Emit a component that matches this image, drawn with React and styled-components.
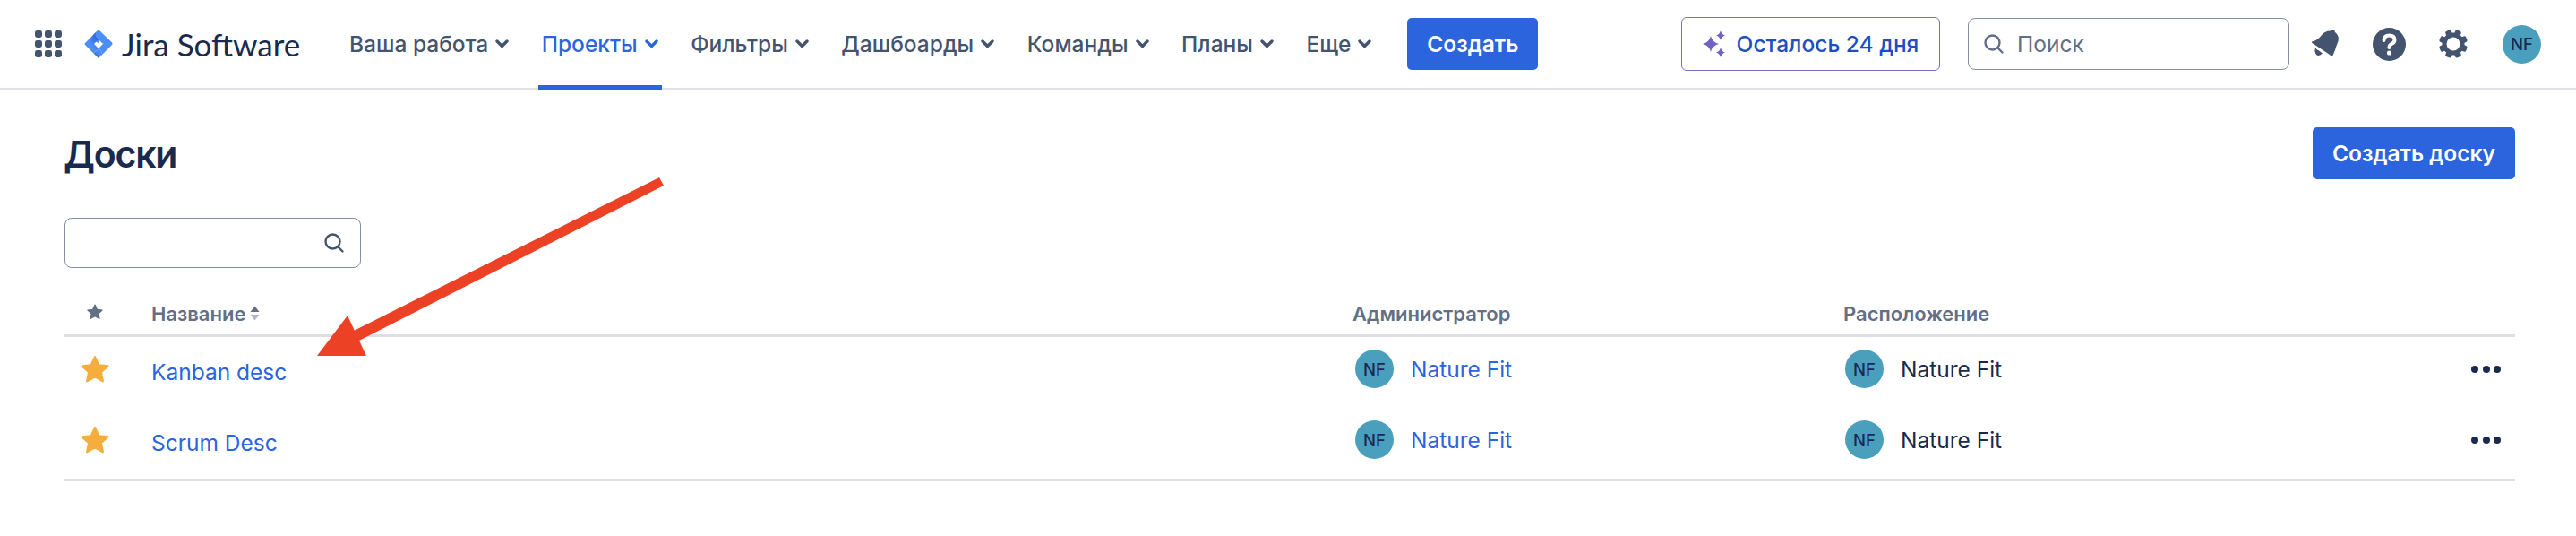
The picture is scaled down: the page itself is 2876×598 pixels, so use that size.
import React from 'react';
import styled, { createGlobalStyle } from 'styled-components';

const GlobalStyle = createGlobalStyle`
  html, body { margin: 0; padding: 0; background: #fff; }
  body { font-family: Inter, "Liberation Sans", sans-serif; color: #1a2a4f; }
`;

const BLUE = '#2c64dd';
const NAV_ITEMS = ['Ваша работа', 'Проекты', 'Фильтры', 'Дашбоарды', 'Команды', 'Планы', 'Еще'];
const BOARDS = [
  { name: 'Kanban desc' },
  { name: 'Scrum Desc' },
];

const Page = styled.div`
  width: 2876px;
  height: 598px;
  position: relative;
  overflow: hidden;
`;

const TopBar = styled.header`
  height: 100px;
  box-sizing: border-box;
  padding: 0 39px;
  display: flex;
  align-items: center;
  border-bottom: 2px solid #e0e1e8;
`;

const Brand = styled.div`
  display: flex;
  align-items: center;
  width: 347px;
  flex: none;
`;

const BrandName = styled.span`
  font-family: Lato, sans-serif;
  font-size: 35px;
  color: #1a2a4f;
  margin-left: 10px;
  white-space: nowrap;
`;

const Nav = styled.nav`
  display: flex;
  align-self: stretch;
  gap: 28.5px;
`;

const NavItem = styled.div`
  display: flex;
  align-items: center;
  gap: 8px;
  padding: 2px 4px 0;
  margin-bottom: -2px;
  font-size: 24.5px;
  font-weight: 500;
  white-space: nowrap;
  color: ${p => (p.$active ? BLUE : '#44546f')};
  border-bottom: 5px solid ${p => (p.$active ? BLUE : 'transparent')};
`;

const PrimaryButton = styled.button`
  height: 58px;
  border: 0;
  border-radius: 5px;
  background: ${BLUE};
  color: #fff;
  font: 600 24.5px Inter, sans-serif;
  padding: 0 22px;
  white-space: nowrap;
`;

const CreateButton = styled(PrimaryButton)`
  margin-left: 36px;
`;

const RightGroup = styled.div`
  margin-left: auto;
  display: flex;
  align-items: center;
`;

const TrialButton = styled.div`
  width: 289px;
  height: 60px;
  box-sizing: border-box;
  border: 1.5px solid #7e6cc9;
  border-radius: 6px;
  display: flex;
  align-items: center;
  justify-content: center;
  gap: 12px;
  color: #1d4fc2;
  font-size: 24.5px;
  font-weight: 500;
  white-space: nowrap;
`;

const SearchField = styled.div`
  width: ${p => p.$width}px;
  height: ${p => p.$height}px;
  box-sizing: border-box;
  border: 1.5px solid #8590a2;
  border-radius: 8px;
  display: flex;
  align-items: center;
  justify-content: ${p => (p.$iconRight ? 'flex-end' : 'flex-start')};
  padding: ${p => (p.$iconRight ? '0 18px 0 0' : '0 0 0 17px')};
  gap: 15px;
  color: #626f86;
  font-size: 24.5px;
`;

const TopSearch = styled(SearchField)`
  margin-left: 31px;
`;

const IconSlot = styled.div`
  margin-left: ${p => p.$gap}px;
  display: flex;
`;

const Avatar = styled.div`
  width: 43px;
  height: 43px;
  flex: none;
  border-radius: 50%;
  background: #4a9fbd;
  color: #1a2a4f;
  font-size: 18.5px;
  font-weight: 500;
  display: flex;
  align-items: center;
  justify-content: center;
`;

const Main = styled.main`
  padding: 42px 68px 0 72px;
`;

const TitleRow = styled.div`
  display: flex;
  align-items: flex-start;
  justify-content: space-between;
`;

const Title = styled.h1`
  margin: 5px 0 0 -1px;
  font-size: 41px;
  line-height: 50px;
  font-weight: 600;
  letter-spacing: -1.2px;
  color: #1a2a4f;
`;

const FilterRow = styled.div`
  margin-top: 43px;
`;

const Row = styled.div`
  display: grid;
  grid-template-columns: 97px 1341px 548px 1fr 49px;
  align-items: center;
`;

const HeaderRow = styled(Row)`
  margin-top: 24px;
  height: 50px;
  border-bottom: 3px solid #dedfe6;
  color: #626f86;
  font-size: 22px;
  font-weight: 600;
`;

const HeadText = styled.div`
  padding-top: 3px;
`;

const BodyRow = styled(Row)`
  height: 79px;
  box-sizing: border-box;
  font-size: 24.5px;
  padding-bottom: 8px;
  & + & {
    height: 82px;
    padding: 0 0 8px;
    border-bottom: 3px solid #dedfe6;
  }
`;

const HeadLabel = styled(HeadText)`
  display: flex;
  align-items: center;
  gap: 5px;
`;

const StarCell = styled.div`
  display: flex;
  padding-left: ${p => p.$pad}px;
`;

const BoardLink = styled.a`
  color: ${BLUE};
  position: relative;
  top: 3px;
`;

const Person = styled.div`
  display: flex;
  align-items: center;
  gap: 19px;
  padding-left: ${p => p.$pad}px;
  color: ${p => (p.$link ? BLUE : '#1a2a4f')};
`;

const Dots = styled.div`
  display: flex;
  gap: 4.5px;
  justify-self: start;
`;

const Dot = styled.span`
  width: 8px;
  height: 8px;
  border-radius: 50%;
  background: #1a2a4f;
`;

const ArrowOverlay = styled.svg`
  position: absolute;
  left: 0;
  top: 0;
  pointer-events: none;
`;

const GridIcon = () => (
  <svg width="30" height="30" viewBox="0 0 30 30" fill="#44546f">
    {[0, 11, 22].map(y => [0, 11, 22].map(x => (
      <rect key={`${x}-${y}`} x={x} y={y} width="8" height="8" rx="2.4" />
    )))}
  </svg>
);

const JiraLogo = () => (
  <svg width="32" height="32" viewBox="0 0 32 32" style={{ marginLeft: 25 }}>
    <defs>
      <linearGradient id="jiraA" x1="0.7" y1="0.1" x2="0.35" y2="0.5">
        <stop offset="0" stopColor="#2a62d8" />
        <stop offset="1" stopColor="#4c8df6" />
      </linearGradient>
      <linearGradient id="jiraB" x1="0.35" y1="0.95" x2="0.65" y2="0.5">
        <stop offset="0" stopColor="#2a62d8" />
        <stop offset="1" stopColor="#4c8df6" />
      </linearGradient>
    </defs>
    <path d="M16 0 L10.5 5.5 Q8.5 10 16 15.5 L16 11 L20.5 15.5 L31 16 Q32 15.5 31 14.5 Z" fill="#4c8df6" />
    <path d="M16 0 L1 15 Q0 16 1 17 L10.5 26.5 L16 21 L11 16 L16 11 Q9 6 16 0 Z" fill="url(#jiraA)" />
    <path d="M21 16 L16 21 Q23 26 16 32 L31 17 Q32 16 31 15 L26 11 Z" fill="#4c8df6" />
    <path d="M16 32 L10.5 26.5 L16 21 Q23 26 16 32 Z" fill="url(#jiraB)" />
  </svg>
);

const Chevron = () => (
  <svg width="15" height="10" viewBox="0 0 15 10" fill="none" stroke="currentColor" strokeWidth="3.4" strokeLinecap="round" strokeLinejoin="round">
    <path d="M2 2 L7.5 7.5 L13 2" />
  </svg>
);

const Sparkles = () => (
  <svg width="26" height="30" viewBox="0 0 26 30" fill="#7360c5">
    <path d="M9 6 Q10.5 13 18 15 Q10.5 17 9 24 Q7.5 17 0 15 Q7.5 13 9 6 Z" />
    <path d="M20 0 Q21 4.5 25 5.5 Q21 6.5 20 11 Q19 6.5 15 5.5 Q19 4.5 20 0 Z" />
    <path d="M20 19 Q21 23.5 25 24.5 Q21 25.5 20 30 Q19 25.5 15 24.5 Q19 23.5 20 19 Z" />
  </svg>
);

const SearchIcon = ({ color }) => (
  <svg width="22" height="22" viewBox="0 0 22 22" fill="none" stroke={color} strokeWidth="2.4" strokeLinecap="round" style={{ flex: 'none' }}>
    <circle cx="9.5" cy="9.5" r="8" />
    <path d="M15.5 15.5 L20.5 20.5" />
  </svg>
);

const BellIcon = () => (
  <svg width="30" height="30" viewBox="0 0 30 30" fill="#44546f">
    <path d="M0 12.5 Q7 11 11 5 Q15.5 0 21 0.5 L23.5 -0.5 Q25 -1 25.5 0.5 L26 2 Q31 6 29.5 12 Q27 18 26 22 L23 29 Q21.5 29 20 27 L0.5 14 Q-0.5 13 0 12.5 Z" />
    <path d="M4 19.5 L12 25.5 Q9 29 5.5 27.5 Q2.5 24 4 19.5 Z" />
    <path d="M7 21.5 L4.5 18" stroke="#fff" strokeWidth="2" />
  </svg>
);

const HelpIcon = () => (
  <svg width="37" height="37" viewBox="0 0 37 37">
    <circle cx="18.5" cy="18.5" r="18.5" fill="#44546f" />
    <path d="M12.5 14 Q13 8.5 18.5 8.5 Q24.5 8.5 24.5 13.5 Q24.5 16.5 21 18 Q18.5 19.2 18.5 22" fill="none" stroke="#fff" strokeWidth="4" strokeLinecap="round" />
    <circle cx="18.5" cy="28" r="2.6" fill="#fff" />
  </svg>
);

const GearIcon = () => (
  <svg width="32" height="32" viewBox="0 0 32 32" fill="#44546f">
    {[22.5, 67.5, 112.5, 157.5, 202.5, 247.5, 292.5, 337.5].map(a => (
      <rect key={a} x="12.5" y="0" width="7" height="8" rx="2" transform={`rotate(${a} 16 16)`} />
    ))}
    <circle cx="16" cy="16" r="10" fill="none" stroke="#44546f" strokeWidth="5" />
  </svg>
);

const StarIcon = ({ size, color }) => (
  <svg width={size} height={size} viewBox="0 0 24 24" fill={color} stroke={color} strokeWidth="1.6" strokeLinejoin="round">
    <path d="M12 1.5 L15.2 8.4 L22.8 9.3 L17.2 14.5 L18.7 22 L12 18.2 L5.3 22 L6.8 14.5 L1.2 9.3 L8.8 8.4 Z" />
  </svg>
);

const SortIcon = () => (
  <svg width="11" height="17" viewBox="0 0 11 17">
    <path d="M5.5 0.5 L10.5 7 L0.5 7 Z" fill="#626f86" />
    <path d="M5.5 16.5 L10.5 10 L0.5 10 Z" fill="#b3b9c4" />
  </svg>
);

export default function App() {
  return (
    <Page>
      <GlobalStyle />
      <TopBar>
        <Brand>
          <GridIcon />
          <JiraLogo />
          <BrandName>Jira Software</BrandName>
        </Brand>
        <Nav>
          {NAV_ITEMS.map(item => (
            <NavItem key={item} $active={item === 'Проекты'}>
              {item}
              <Chevron />
            </NavItem>
          ))}
        </Nav>
        <CreateButton>Создать</CreateButton>
        <RightGroup>
          <TrialButton>
            <Sparkles />
            Осталось 24 дня
          </TrialButton>
          <TopSearch $width={359} $height={58}>
            <SearchIcon color="#626f86" />
            Поиск
          </TopSearch>
          <IconSlot $gap={25}><BellIcon /></IconSlot>
          <IconSlot $gap={38}><HelpIcon /></IconSlot>
          <IconSlot $gap={37}><GearIcon /></IconSlot>
          <IconSlot $gap={39}><Avatar>NF</Avatar></IconSlot>
        </RightGroup>
      </TopBar>
      <Main>
        <TitleRow>
          <Title>Доски</Title>
          <PrimaryButton>Создать доску</PrimaryButton>
        </TitleRow>
        <FilterRow>
          <SearchField $width={331} $height={56} $iconRight>
            <SearchIcon color="#44546f" />
          </SearchField>
        </FilterRow>
        <HeaderRow>
          <StarCell $pad={25}><StarIcon size={18} color="#626f86" /></StarCell>
          <HeadLabel>Название <SortIcon /></HeadLabel>
          <HeadText>Администратор</HeadText>
          <HeadText>Расположение</HeadText>
          <div />
        </HeaderRow>
        {BOARDS.map(board => (
          <BodyRow key={board.name}>
            <StarCell $pad={18}><StarIcon size={32} color="#f5ae3d" /></StarCell>
            <BoardLink>{board.name}</BoardLink>
            <Person $link $pad={3}><Avatar>NF</Avatar>Nature Fit</Person>
            <Person $pad={2}><Avatar>NF</Avatar>Nature Fit</Person>
            <Dots><Dot /><Dot /><Dot /></Dots>
          </BodyRow>
        ))}
      </Main>
      <ArrowOverlay width="2876" height="598" viewBox="0 0 2876 598">
        <path d="M736 198 L741 207 L399 381 L395 369 Z" fill="#ec4125" />
        <path d="M388 352 L354 397 L409 397 Z" fill="#ec4125" />
      </ArrowOverlay>
    </Page>
  );
}
